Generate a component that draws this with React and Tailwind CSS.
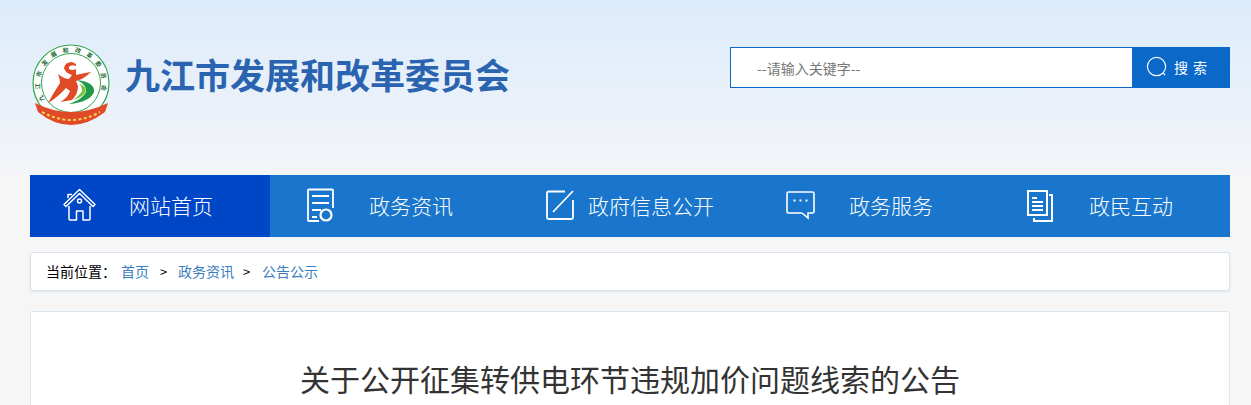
import React from "react";

function Logo() {
  return (
    <svg viewBox="0 0 88 84" className="w-[88px] h-[84px] shrink-0 -ml-1">
      <defs>
        <path id="ringPath" d="M19 58 A31 31 0 1 1 71 58" />
      </defs>
      <circle cx="45" cy="41" r="38" fill="#fff" stroke="#2fa84f" strokeWidth="1.2" />
      <circle cx="45" cy="41" r="29.5" fill="#fff" stroke="#2fa84f" strokeWidth="1" />
      <text fontSize="6" fontWeight="700" fill="#1f6b3a" fontFamily="'Noto Sans CJK SC', sans-serif" letterSpacing="5.6">
        <textPath href="#ringPath" startOffset="0">九江市发展和改革委员会</textPath>
      </text>
      {/* red ribbon */}
      <path d="M9 61 Q45 79 82 61 L79 70 Q62 83 45 83 Q28 83 12 70 Z" fill="#e04a26" />
      <path d="M16 70 Q45 86 74 70" fill="none" stroke="#f6d25a" strokeWidth="2" strokeDasharray="3 2.4" />
      {/* figure */}
      <path
        d="M32 32 Q38 37 43 37 L46 33 Q39 31 38 26 Q39 20 46 20 L50 22 L50 24 Q45 22 43 25 Q42 28 47 28 L50 27 L50 33 Q58 31 65 30 Q58 37 50 39 L52 44 Q52 52 46 58 L34 60 Q42 56 44 49 L40 46 Q32 55 22 61 Q28 50 34 41 Q34 37 32 32 Z"
        fill="#e04a26"
      />
      {/* green swoosh */}
      <path d="M51 38 Q69 40 68 50 Q64 60 43 62 Q57 57 60 50 Q61 43 51 38 Z" fill="#1f9a4b" />
      <path d="M54 42 Q62 45 59 51 Q55 56 47 58 Q54 53 56 49 Q56 45 54 42 Z" fill="#7cc242" />
    </svg>
  );
}

function HomeIcon() {
  return (
    <svg viewBox="0 0 36 36" className="w-9 h-9" fill="none" stroke="#fff" strokeWidth="1.5" strokeLinejoin="round">
      <path d="M6 10 V6.5 H10 V6.5" />
      <path d="M2 16.5 L17.5 1.5 L33 16.5 L31 18.5 L17.5 5.5 L4 18.5 Z" />
      <path d="M7 18 V31 Q7 32 8 32 H14.5 V23 H21 V32 H27 Q28 32 28 31 V18" />
      <circle cx="17.5" cy="13" r="2" />
    </svg>
  );
}

function DocIcon() {
  return (
    <svg viewBox="0 0 36 36" className="w-9 h-9" fill="none" stroke="#fff" strokeWidth="1.8">
      <path d="M17 33 H7 Q6 33 6 32 V2.5 Q6 1.5 7 1.5 H30 Q31 1.5 31 2.5 V20" />
      <path d="M10 8 H27 M10 15 H27 M10 22 H19 M10 29 H15" />
      <circle cx="24" cy="27" r="5.5" strokeWidth="2.2" />
    </svg>
  );
}

function EditIcon() {
  return (
    <svg viewBox="0 0 36 36" className="w-9 h-9" fill="none" stroke="#fff" strokeWidth="1.8">
      <path d="M23 3.5 H6.5 Q5 3.5 5 5 V29.5 Q5 31 6.5 31 H29.5 Q31 31 31 29.5 V12" />
      <path d="M31 3 L11 24" />
    </svg>
  );
}

function ChatIcon() {
  return (
    <svg viewBox="0 0 36 36" className="w-9 h-9" fill="none" stroke="#fff" strokeWidth="1.6">
      <path d="M20 25 H6.5 Q5 25 5 23.5 V5.5 Q5 4 6.5 4 H30.5 Q32 4 32 5.5 V23.5 Q32 25 30.5 25 H26 V30 L20 25" />
      <path d="M11.5 12.5 H13.5 M17.5 12.5 H19.5 M23.5 12.5 H25.5" strokeWidth="2" />
    </svg>
  );
}

function FilesIcon() {
  return (
    <svg viewBox="0 0 36 36" className="w-9 h-9" fill="none" stroke="#fff" strokeWidth="2">
      <path d="M6 3 H25 V27 H6 Z" />
      <path d="M27 7 H30 V33 H12 V30" />
      <path d="M10 10 H15 M10 14 H21 M10 18 H21 M10 22 H21" />
    </svg>
  );
}

const navItems = [
  { label: "网站首页", icon: <HomeIcon />, active: true },
  { label: "政务资讯", icon: <DocIcon /> },
  { label: "政府信息公开", icon: <EditIcon /> },
  { label: "政务服务", icon: <ChatIcon /> },
  { label: "政民互动", icon: <FilesIcon /> },
];

export default function App() {
  return (
    <div className="h-[405px] overflow-hidden bg-[#f6f6f6] font-['Noto_Sans_CJK_SC',sans-serif]">
      {/* Header */}
      <header className="h-[175px] bg-gradient-to-b from-[#dcebfb] to-[#f4f5f8]">
        <div className="w-[1200px] ml-[30px] flex justify-between">
          <div className="flex pt-[42px]">
            <Logo />
            <h1 className="ml-[11px] mt-[7px] text-[35px] leading-[50px] font-bold text-[#2a64b0] whitespace-nowrap">
              九江市发展和改革委员会
            </h1>
          </div>
          <div className="pt-[47px]">
            <div className="flex w-[500px] h-[41px] border border-[#0a68c8] bg-white">
              <input
                placeholder="--请输入关键字--"
                className="flex-1 min-w-0 pl-[26px] pt-[1px] text-[14px] text-[#666] placeholder:text-[#777] outline-none"
              />
              <button className="w-[97px] bg-[#0a68c8] flex items-center pl-[14px] text-white">
                <svg viewBox="0 0 24 24" className="w-[23px] h-[23px]" fill="none" stroke="#fff" strokeWidth="1.2">
                  <circle cx="11" cy="11" r="9.5" />
                  <path d="M18 18 L20 20" />
                </svg>
                <span className="ml-[5px] text-[14px] tracking-[5px] whitespace-nowrap">搜索</span>
              </button>
            </div>
          </div>
        </div>
      </header>

      <div className="w-[1200px] ml-[30px]">
        {/* Nav */}
        <nav className="flex h-[62px] bg-[#1976cc]">
          {navItems.map((item) => (
            <a
              key={item.label}
              className={
                item.active
                  ? "w-[240px] flex items-center bg-[#0047c8] text-white"
                  : "w-[240px] flex items-center text-white"
              }
            >
              <span className="ml-[32px] mr-[10px] w-9 h-9 shrink-0">{item.icon}</span>
              <span className="w-[126px] text-center text-[21px] font-light whitespace-nowrap">{item.label}</span>
            </a>
          ))}
        </nav>

        {/* Breadcrumb */}
        <div className="mt-[15px] h-[39px] flex items-center pl-[15px] bg-white border border-[#d7e4ef] rounded-[3px] shadow-[0_1px_2px_rgba(170,190,210,0.35)] text-[14px] text-black whitespace-nowrap">
          <span className="w-[75px]">当前位置：</span>
          <a className="text-[#3a7ebf]">首页</a>
          <span className="mx-[11px] w-[7px] text-center text-[13px]">&gt;</span>
          <a className="text-[#3a7ebf]">政务资讯</a>
          <span className="ml-[9px] mr-[12px] w-[7px] text-center text-[13px]">&gt;</span>
          <a className="text-[#3a7ebf]">公告公示</a>
        </div>

        {/* Article */}
        <div className="mt-[20px] h-[300px] bg-white border border-[#dbe6f0] rounded-[3px] pt-[42px] text-center">
          <h2 className="text-[30px] leading-[48px] font-normal text-[#333]">
            关于公开征集转供电环节违规加价问题线索的公告
          </h2>
        </div>
      </div>
    </div>
  );
}
